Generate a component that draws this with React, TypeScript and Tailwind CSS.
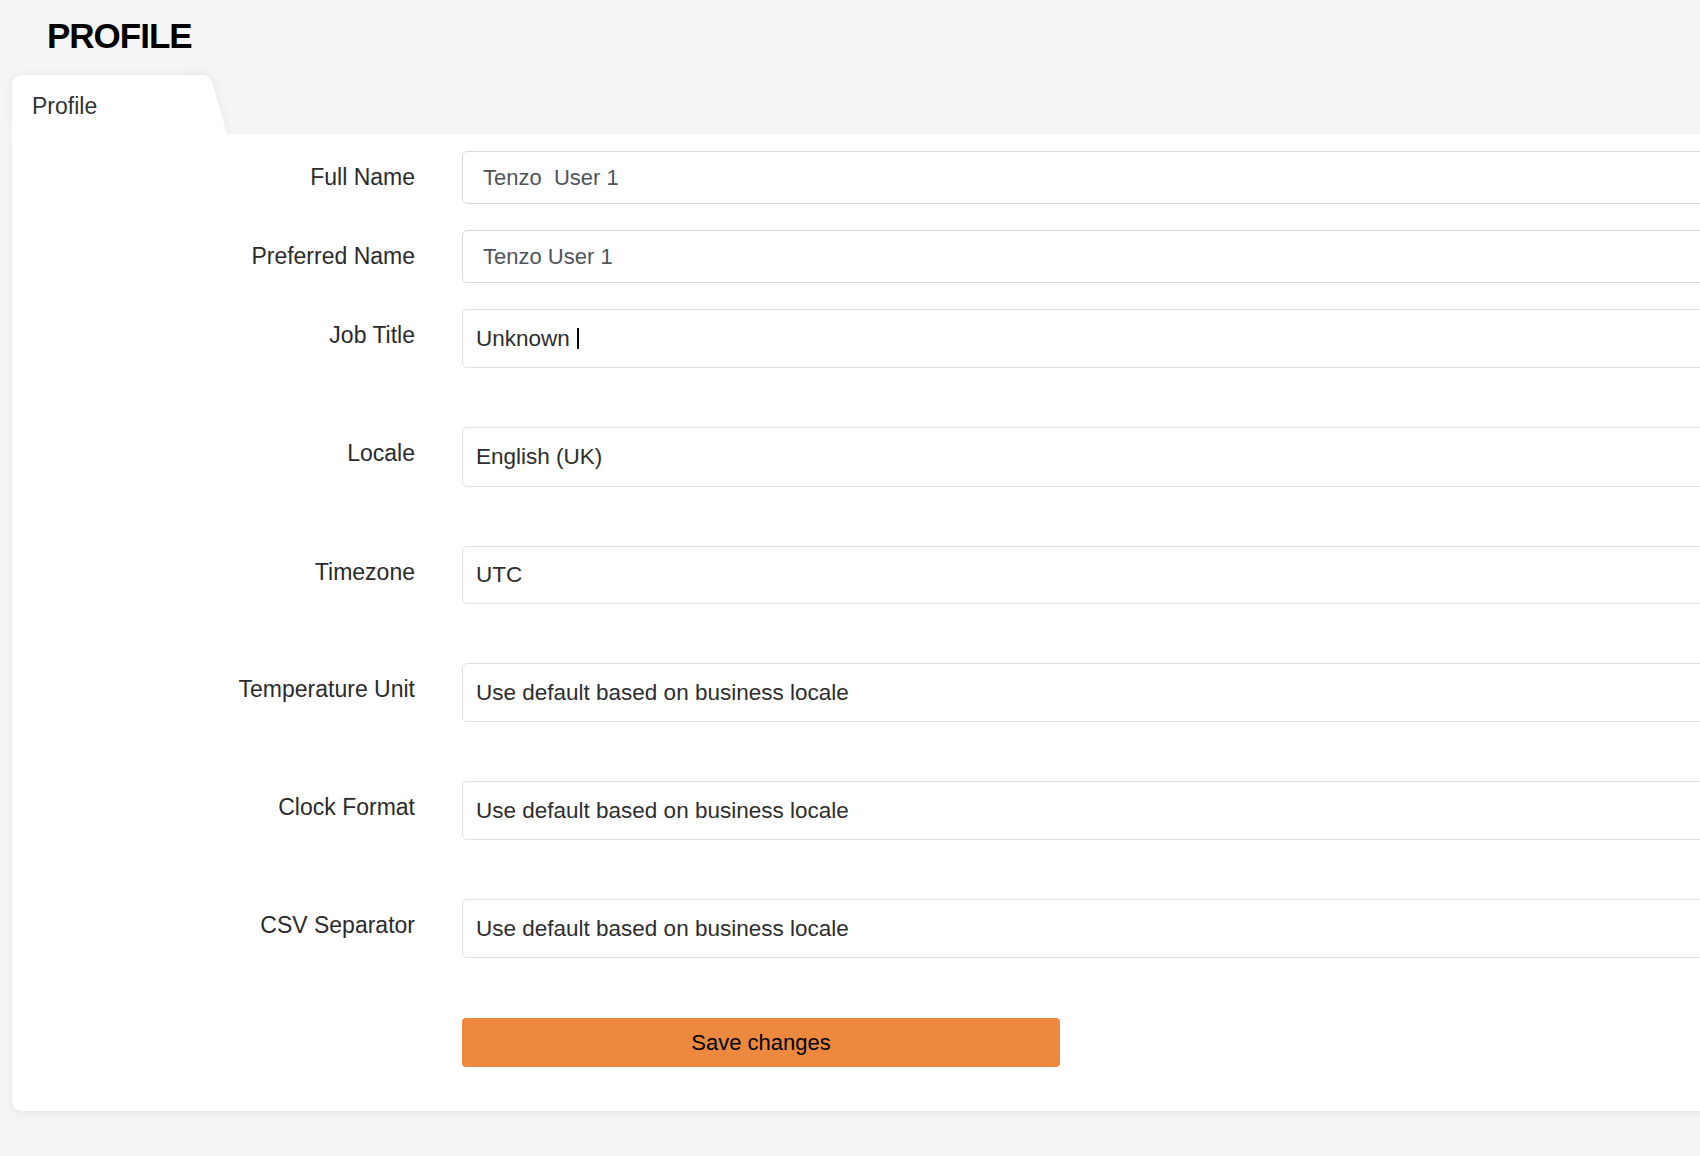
export default function App() {
  const rows = [
    { label: "Temperature Unit", value: "Use default based on business locale" },
    { label: "Clock Format", value: "Use default based on business locale" },
    { label: "CSV Separator", value: "Use default based on business locale" },
  ];

  return (
    <div
      className="h-[1156px] w-full overflow-hidden bg-[#f6f5f5] text-[#2b2b2b]"
      style={{ fontFamily: '"Liberation Sans", Arial, sans-serif' }}
    >
      <div className="w-[1780px]">
        <h1 className="pl-[47px] pt-[18px] text-[35px] font-bold leading-none tracking-[-1px] text-black">PROFILE</h1>

        {/* tab */}
        <div className="ml-[12px] mt-[22px] flex h-[59px]">
          <div className="relative z-10 w-[195px] rounded-tl-[10px] bg-white pl-[20px] pt-[15px] text-[23px] leading-[33px] text-[#333] shadow-[-2px_-2px_8px_rgba(0,0,0,0.04)]">
            Profile
          </div>
          <div className="w-[26px] -ml-[6px] origin-bottom skew-x-[16deg] rounded-tr-[8px] bg-white shadow-[3px_-2px_8px_rgba(0,0,0,0.04)]" />
        </div>

        {/* card */}
        <div className="ml-[12px] rounded-b-[10px] rounded-tr-[10px] bg-white pb-[44px] pr-[40px] pt-[17px] shadow-[0_3px_10px_rgba(0,0,0,0.06)]">
          <div className="flex">
            <div className="w-[403px] shrink-0 pt-[10px] text-right text-[23px] leading-[33px]">Full Name</div>
            <div className="ml-[47px] flex h-[53px] flex-1 items-center rounded-[5px] border border-[#d6dadd] pl-[20px] text-[22px] text-[#50555a] whitespace-pre">
              Tenzo  User 1
            </div>
          </div>
          <div className="mt-[26px] flex">
            <div className="w-[403px] shrink-0 pt-[10px] text-right text-[23px] leading-[33px]">Preferred Name</div>
            <div className="ml-[47px] flex h-[53px] flex-1 items-center rounded-[5px] border border-[#d6dadd] pl-[20px] text-[22px] text-[#50555a]">
              Tenzo User 1
            </div>
          </div>
          <div className="mt-[26px] flex">
            <div className="w-[403px] shrink-0 pt-[10px] text-right text-[23px] leading-[33px]">Job Title</div>
            <div className="ml-[47px] flex h-[59px] flex-1 items-center rounded-[5px] border border-[#dde1e3] pl-[13px] text-[22.5px] text-[#2e2e2e]">
              Unknown
              <span className="ml-[7px] h-[21px] w-[2px] bg-black" />
            </div>
          </div>
          <div className="mt-[59px] flex">
            <div className="w-[403px] shrink-0 pt-[10px] text-right text-[23px] leading-[33px]">Locale</div>
            <div className="ml-[47px] flex h-[60px] flex-1 items-center rounded-[5px] border border-[#dde1e3] pl-[13px] text-[22.5px] text-[#2e2e2e]">
              English (UK)
            </div>
          </div>
          <div className="mt-[59px] flex">
            <div className="w-[403px] shrink-0 pt-[10px] text-right text-[23px] leading-[33px]">Timezone</div>
            <div className="ml-[47px] flex h-[58px] flex-1 items-center rounded-[5px] border border-[#dde1e3] pl-[13px] text-[22.5px] text-[#2e2e2e]">
              UTC
            </div>
          </div>
          {rows.map((r) => (
            <div key={r.label} className="mt-[59px] flex">
              <div className="w-[403px] shrink-0 pt-[10px] text-right text-[23px] leading-[33px]">{r.label}</div>
              <div className="ml-[47px] flex h-[59px] flex-1 items-center rounded-[5px] border border-[#dde1e3] pl-[13px] text-[22.5px] text-[#2e2e2e]">
                {r.value}
              </div>
            </div>
          ))}
          <button className="ml-[450px] mt-[60px] h-[49px] w-[598px] rounded-[4px] bg-[#ed893f] text-[22px] text-black">
            Save changes
          </button>
        </div>
      </div>
    </div>
  );
}
